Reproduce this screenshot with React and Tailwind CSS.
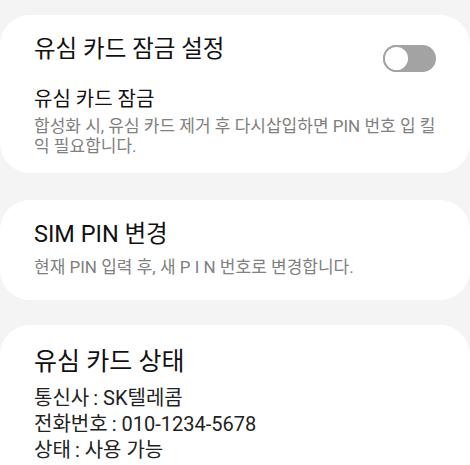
const font = { fontFamily: 'Roboto, "Noto Sans CJK KR", sans-serif' };

const Toggle = () => (
  <div className="relative w-[53px] h-[27px] rounded-full bg-[#a3a3a3]">
    <div className="absolute left-0 top-0 w-[27px] h-[27px] rounded-full bg-white border-[2px] border-[#a3a3a3]"></div>
  </div>
);

export default function App() {
  return (
    <div className="w-[470px] h-[465px] overflow-hidden bg-[#f4f4f4] pt-[15px]" style={font}>
      {/* SIM lock */}
      <div className="bg-white rounded-[30px] h-[158px] px-[34px] pt-[17px]">
        <div className="flex items-start justify-between">
          <h2 className="text-[23.5px] leading-[34px] text-[#111]">유심 카드 잠금 설정</h2>
          <div className="mt-[13px]">
            <Toggle />
          </div>
        </div>
        <p className="mt-[14px] text-[20px] leading-[26px] text-[#111]">유심 카드 잠금</p>
        <p className="mt-[4px] whitespace-nowrap text-[17px] leading-[20px] text-[#808080]">
          합성화 시, 유심 카드 제거 후 다시삽입하면 PIN 번호 입 킬
          <br />
          익 필요합니다.
        </p>
      </div>

      {/* PIN change */}
      <div className="mt-[27px] bg-white rounded-[30px] h-[100px] px-[34px] pt-[17px]">
        <h2 className="text-[23.5px] leading-[34px] text-[#111]">SIM PIN 변경</h2>
        <p className="mt-[6px] text-[17px] leading-[21px] text-[#808080]">
          현재 PIN 입력 후, 새 P I N 번호로 변경합니다.
        </p>
      </div>

      {/* SIM status */}
      <div className="mt-[25px] bg-white rounded-t-[30px] h-[160px] px-[34px] pt-[19px]">
        <h2 className="text-[25px] leading-[36px] text-[#111]">유심 카드 상태</h2>
        <div className="mt-[5px] text-[20px] leading-[26px] text-[#222]">
          <p>통신사{"\u2009"}: SK텔레콤</p>
          <p>전화번호{"\u2009"}: 010-1234-5678</p>
          <p>상태{"\u2009"}: 사용 가능</p>
        </div>
      </div>
    </div>
  );
}
